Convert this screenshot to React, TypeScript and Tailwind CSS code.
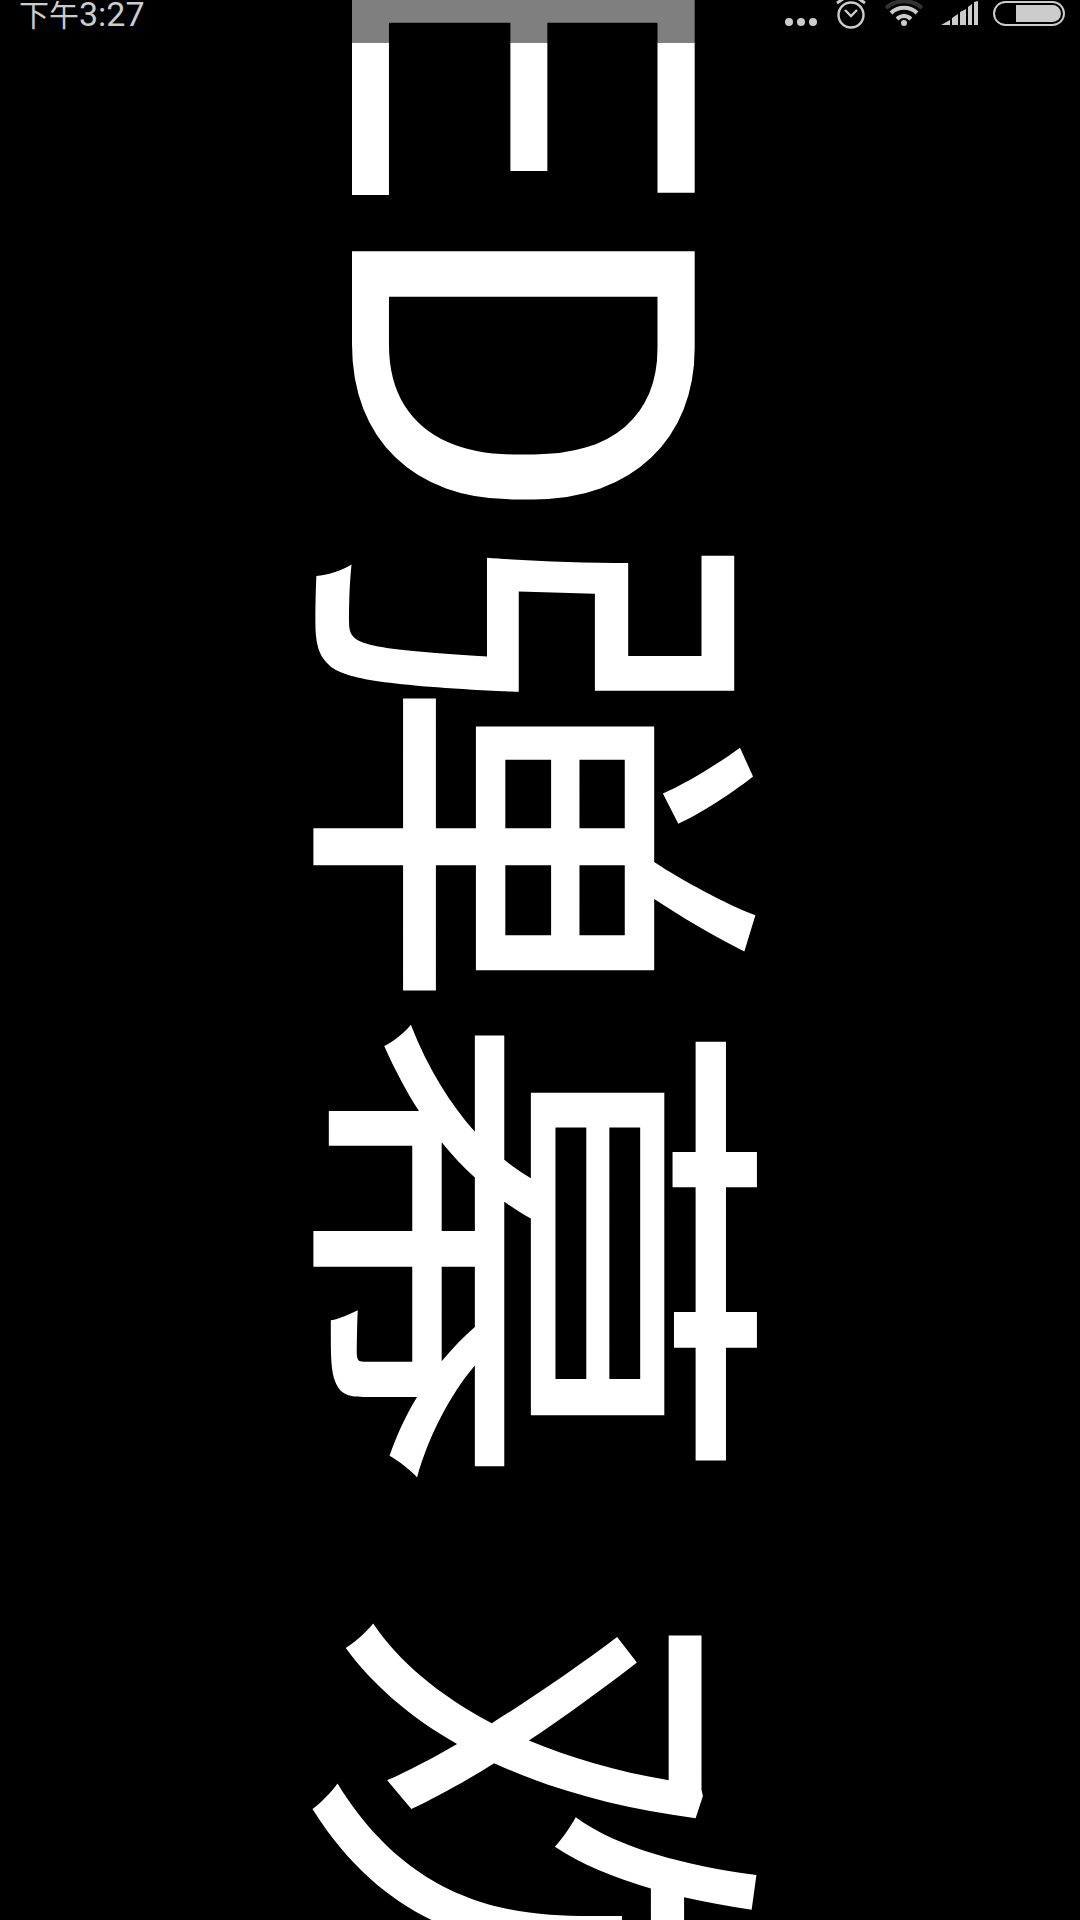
// App.tsx
const StatusIcons = () => {
  return (
    <div className="ml-auto flex items-start pr-[15px] text-[#cccccc]">
      {/* dots */}
      <svg width="32" height="30" viewBox="0 0 32 30" fill="currentColor">
        <circle cx="4" cy="22" r="4" />
        <circle cx="16" cy="22" r="4" />
        <circle cx="28" cy="22" r="4" />
      </svg>

      {/* alarm */}
      <svg className="ml-[19px]" width="30" height="30" viewBox="0 0 30 30" fill="none" stroke="currentColor">
        <circle cx="15" cy="15" r="12.5" strokeWidth="2.4" />
        <path d="M9 10l6 6 6-6" strokeWidth="2.4" />
        <path d="M1 3l6-4M29 3l-6-4" strokeWidth="3" />
      </svg>

      {/* wifi */}
      <svg className="ml-[19px]" width="38" height="30" viewBox="0 0 38 30" fill="none">
        <path d="M1 8C11-1 27-1 37 8" stroke="#333333" strokeWidth="4" />
        <path d="M6 13C13 6 25 6 32 13" stroke="currentColor" strokeWidth="4" />
        <path d="M12 19C16 15 22 15 26 19" stroke="currentColor" strokeWidth="4" />
        <circle cx="19" cy="23" r="3" fill="currentColor" />
      </svg>

      {/* signal */}
      <svg className="ml-[18px]" width="38" height="30" viewBox="0 0 38 30" fill="currentColor">
        <path d="M0 25l9-5v5z" />
        <path d="M11 25v-7l6-4v11z" />
        <path d="M19 25v-13l6-3v16z" />
        <path d="M27 25v-18l4-3v21z" />
        <path d="M33 25v-23l4-1v24z" />
      </svg>

      {/* battery */}
      <div className="ml-[14px] mt-[1px] flex h-[25px] w-[72px] items-stretch justify-end rounded-full border-2 border-[#cccccc] p-[2px]">
        <div className="w-[45px] rounded-r-full bg-[#cccccc]" />
      </div>
    </div>
  );
};

const App = () => {
  return (
    <div className="relative h-[1920px] w-[1080px] overflow-hidden bg-black">
      {/* scrolling text */}
      <div
        className="absolute left-[757px] top-[-322px] origin-top-left rotate-90 whitespace-pre text-[482px] leading-[482px] text-white"
        style={{ fontFamily: '"Roboto", "Noto Sans CJK SC", sans-serif' }}
      >
        LED弹幕 欢迎光临
      </div>

      {/* status bar */}
      <div className="absolute inset-x-0 top-0 flex h-[43px] items-start overflow-hidden bg-black/50">
        <span
          className="pl-[19px] text-[30px] leading-[28px] text-[#cccccc]"
          style={{ fontFamily: '"Roboto", "Noto Sans CJK SC", sans-serif' }}
        >
          下午<span className="text-[34px]">3:27</span>
        </span>
        <StatusIcons />
      </div>
    </div>
  );
};

export default App;
